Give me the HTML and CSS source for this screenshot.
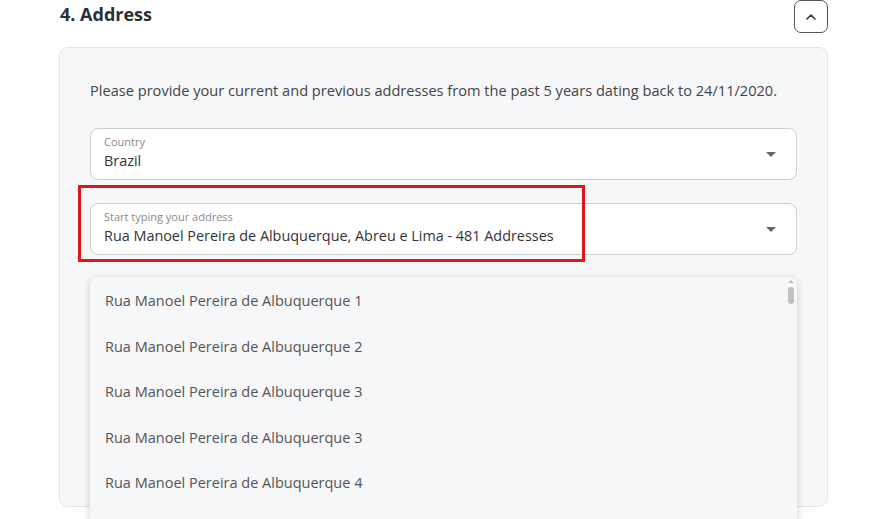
FILE: index.html
```html
<!DOCTYPE html>
<html>
<head>
<meta charset="utf-8">
<link rel="stylesheet" href="styles.css">
</head>
<body>
<div class="page">
  <div class="section-head">
    <h2 class="title">4. Address</h2>
    <button class="collapse" aria-label="Collapse">
      <svg width="12" height="8" viewBox="0 0 12 8"><path d="M2 6 L6 2 L10 6" fill="none" stroke="#333" stroke-width="1.6" stroke-linecap="round" stroke-linejoin="round"/></svg>
    </button>
  </div>
  <div class="card">
    <p class="intro">Please provide your current and previous addresses from the past 5 years dating back to 24/11/2020.</p>
    <div class="field">
      <div class="field-text">
        <span class="label">Country</span>
        <span class="value">Brazil</span>
      </div>
      <span class="caret"></span>
    </div>
    <div class="field-wrap">
      <div class="field">
        <div class="field-text">
          <span class="label">Start typing your address</span>
          <span class="value">Rua Manoel Pereira de Albuquerque, Abreu e Lima - 481 Addresses</span>
        </div>
        <span class="caret"></span>
      </div>
      <div class="highlight"></div>
      <div class="dropdown">
        <ul class="options">
          <li>Rua Manoel Pereira de Albuquerque 1</li>
          <li>Rua Manoel Pereira de Albuquerque 2</li>
          <li>Rua Manoel Pereira de Albuquerque 3</li>
          <li>Rua Manoel Pereira de Albuquerque 3</li>
          <li>Rua Manoel Pereira de Albuquerque 4</li>
        </ul>
        <div class="scrollbar">
          <span class="scroll-arrow"></span>
          <span class="scroll-thumb"></span>
        </div>
      </div>
    </div>
  </div>
</div>
</body>
</html>
```
FILE: styles.css
```css
* { box-sizing: border-box; }
html, body { margin: 0; padding: 0; background: #ffffff; overflow: hidden; height: 519px; }
body { font-family: "Open Sans", "Noto Sans", sans-serif; color: #333; }
.page { padding: 0 58px 0 59px; }
.section-head { display: flex; justify-content: space-between; align-items: flex-start; height: 47px; }
.title { margin: 2px 0 0 1px; font-size: 18px; font-weight: 700; color: #2f2f2f; line-height: 24px; }
.collapse { width: 34px; height: 33px; margin: 0; padding: 0; border: 1px solid #555; border-radius: 7px; background: #fff; display: flex; align-items: center; justify-content: center; }
.card { background: #f6f7f9; border: 1px solid #e4e6ea; border-radius: 9px; padding: 30px 30px 0 30px; height: 460px; }
.intro { margin: 0 0 26px 0; font-size: 14.6px; line-height: 24px; color: #444; }
.field { background: #fff; border: 1px solid #cfcfcf; border-radius: 8px; height: 52px; display: flex; align-items: center; padding: 0 14px 3px 13px; }
.field-text { flex: 1; display: flex; flex-direction: column; }
.label { font-size: 11px; line-height: 14px; color: #8a8a8a; }
.value { font-size: 14.4px; line-height: 21px; color: #333; margin-top: 1px; }
.caret { width: 0; height: 0; border-left: 5px solid transparent; border-right: 5px solid transparent; border-top: 5px solid #666; margin: 3px 6px 0 0; }
.field-wrap { position: relative; margin-top: 23px; }
.highlight { position: absolute; left: -12px; top: -18px; width: 507px; height: 77px; border: 3px solid #e0161b; pointer-events: none; }
.dropdown { position: absolute; left: 0; right: 0; top: 74px; height: 300px; background: #f6f7f9; border-radius: 8px 8px 0 0; box-shadow: 0 2px 8px rgba(0,0,0,0.18); overflow: hidden; }
.options { list-style: none; margin: 0; padding: 12px 0 0 15px; }
.options li { height: 45.5px; line-height: 24px; font-size: 14.5px; color: #555; }
.scrollbar { position: absolute; right: 2px; top: 3px; width: 8px; display: flex; flex-direction: column; align-items: center; }
.scroll-arrow { width: 0; height: 0; border-left: 3px solid transparent; border-right: 3px solid transparent; border-bottom: 3px solid #bbb; margin-bottom: 4px; }
.scroll-thumb { width: 6px; height: 17px; border-radius: 3px; background: #c1c1c1; }
```
